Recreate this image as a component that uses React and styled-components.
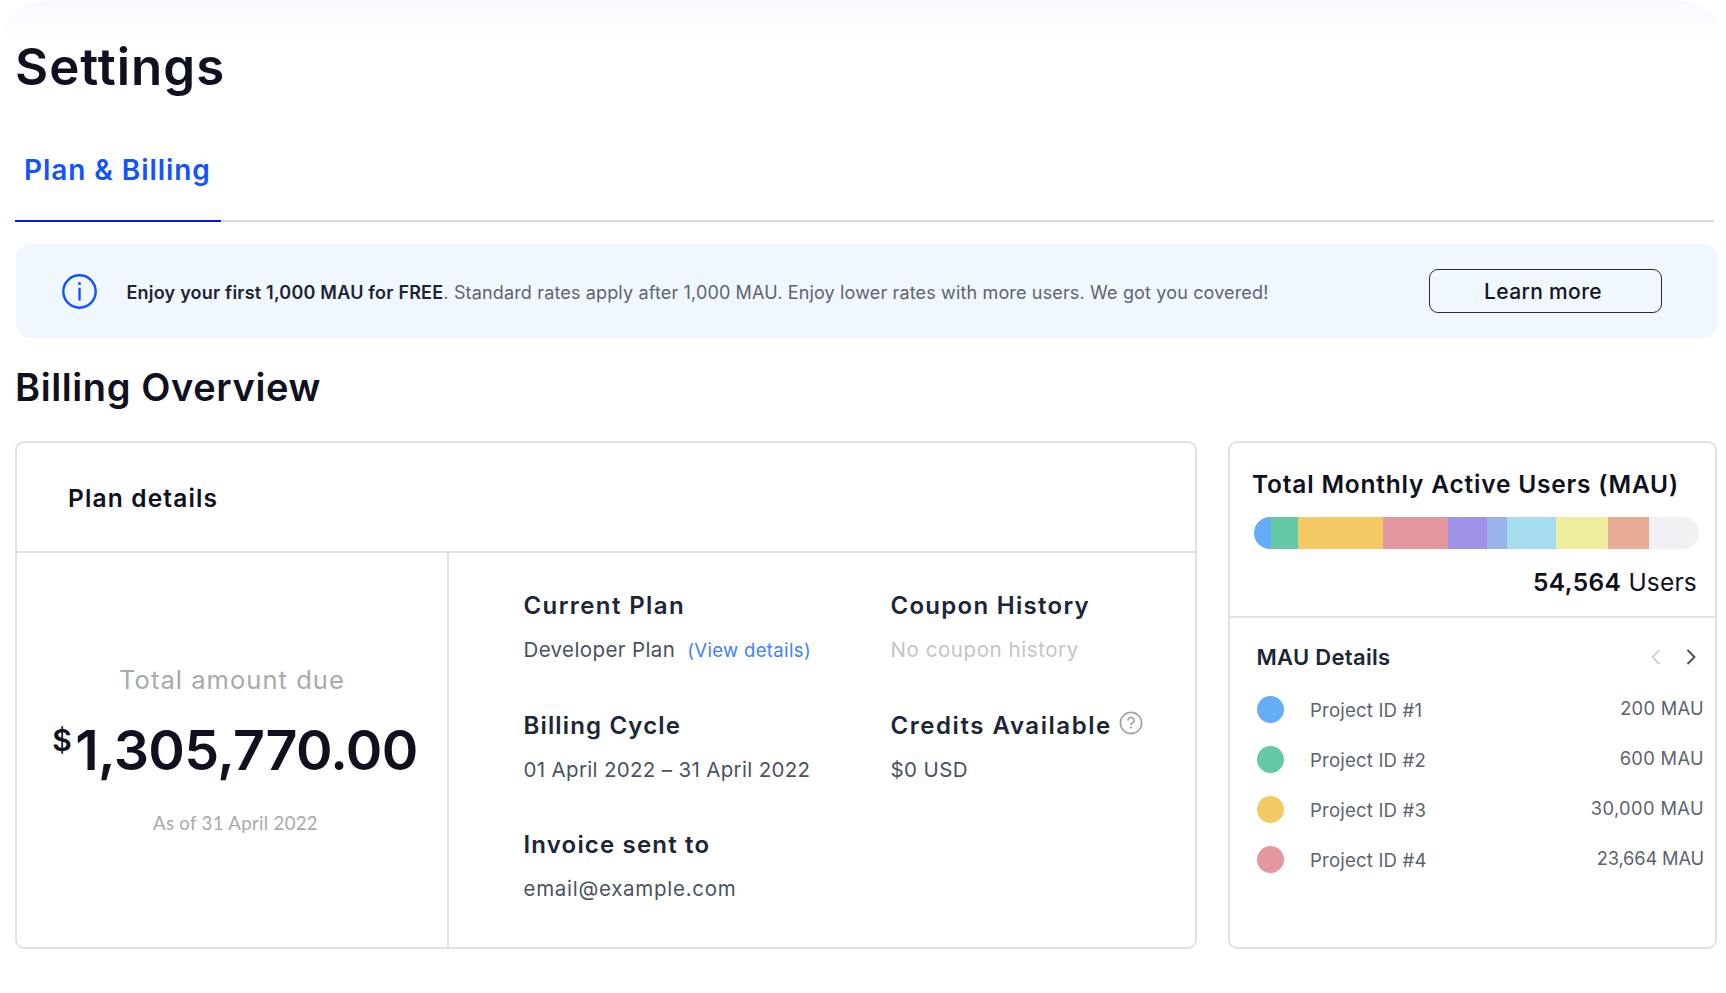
import React from "react";
import styled, { createGlobalStyle } from "styled-components";

const GlobalStyle = createGlobalStyle`
  * { box-sizing: border-box; }
  body { margin: 0; background: #fff; font-family: "Inter", "Open Sans", sans-serif; color: #0f1020; }
  h1, h2, h3, p { margin: 0; }
`;

const line = "#e1e1e1";

const Page = styled.main`
  width: 1720px;
  height: 993px;
  margin: 0 3px;
  padding: 37px 0 0 12px;
  border-radius: 48px 48px 0 0 / 40px 40px 0 0;
  background: linear-gradient(#f7f9ff 0, #fbfcff 20px, #fff 40px);
  overflow: hidden;
`;

const PageTitle = styled.h1`
  font-size: 51px;
  line-height: 60px;
  font-weight: 600;
  letter-spacing: 1px;
`;

const Tabs = styled.nav`
  display: flex;
  width: 1699px;
  height: 125px;
  border-bottom: 2px solid #dadada;
`;

const Tab = styled.div`
  width: 206px;
  height: 125px;
  padding: 53px 0 0 9px;
  border-bottom: 2px solid #0a14ff;
  color: #1352ff;
  font-size: 28px;
  line-height: 40px;
  font-weight: 600;
  letter-spacing: 0.93px;
  white-space: nowrap;
`;

const Banner = styled.section`
  display: flex;
  align-items: center;
  width: 1702px;
  height: 94px;
  margin: 22px 0 0 1px;
  padding: 0 56px 0 46px;
  border-radius: 15px;
  background: #f0f7ff;
`;

const BannerText = styled.p`
  flex: 1;
  margin: 4px 0 0 29.5px;
  color: #5d6470;
  font-size: 18px;
  line-height: 24px;
  letter-spacing: 0.15px;
  white-space: nowrap;

  strong {
    color: #1c2433;
    font-weight: 600;
    letter-spacing: 0.21px;
  }
`;

const OutlineButton = styled.button`
  width: 233px;
  height: 44px;
  padding: 2px 5px 0 0;
  border: 1.5px solid #2a2d38;
  border-radius: 9px;
  background: transparent;
  color: #12141f;
  font: 500 21px/30px "Inter", sans-serif;
  letter-spacing: 0.35px;
`;

const SectionTitle = styled.h2`
  margin-top: 24px;
  font-size: 38px;
  line-height: 50px;
  font-weight: 600;
  letter-spacing: 0.6px;
`;

const Cards = styled.div`
  display: flex;
  gap: 31px;
  margin-top: 29px;
`;

const Card = styled.section`
  width: ${(p) => p.$width}px;
  height: 508px;
  border: 2px solid ${line};
  border-radius: 9px;
  display: flex;
  flex-direction: column;
`;

const CardHeader = styled.h3`
  flex: none;
  height: 110px;
  padding: 40px 0 0 51px;
  border-bottom: 2px solid ${line};
  font-size: 24.5px;
  line-height: 30px;
  font-weight: 600;
  letter-spacing: 1.15px;
`;

const PlanBody = styled.div`
  flex: 1;
  min-height: 0;
  display: flex;
`;

const AmountPane = styled.div`
  width: 432px;
  padding-top: 112px;
  border-right: 2px solid ${line};
  display: flex;
  flex-direction: column;
  align-items: center;
  color: #a9a9a9;
`;

const AmountLabel = styled.p`
  font-size: 25.5px;
  line-height: 30px;
  font-weight: 400;
  letter-spacing: 1.05px;
`;

const Amount = styled.div`
  display: flex;
  margin: 25px 0 31px 6px;
  color: #10101f;
  font-size: 55.5px;
  line-height: 60px;
  font-weight: 600;
  letter-spacing: -0.65px;
`;

const Currency = styled.span`
  margin: 5px 4px 0 0;
  font-size: 30px;
  line-height: 30px;
`;

const AmountDate = styled.p`
  margin-left: 7px;
  font-family: "Lato", sans-serif;
  font-size: 18.6px;
  line-height: 24px;
  letter-spacing: 0.32px;
`;

const InfoGrid = styled.div`
  display: grid;
  grid-template-columns: 367px 1fr;
  grid-auto-rows: 119.5px;
  padding: 38px 0 0 74.5px;
`;

const InfoTitle = styled.h3`
  display: flex;
  align-items: center;
  color: #1c2637;
  font-size: 24px;
  line-height: 30px;
  font-weight: 600;
  letter-spacing: ${(p) => p.$spacing}px;
  white-space: nowrap;

  svg { margin: -5px 0 0 7px; }
`;

const InfoValue = styled.p`
  margin-top: 15px;
  color: ${(p) => (p.$muted ? "#c4c4c6" : "#4a5260")};
  font-size: 20.5px;
  line-height: 28px;
  font-weight: 400;
  letter-spacing: ${(p) => p.$spacing}px;
  white-space: nowrap;
`;

const DetailsLink = styled.a`
  margin-left: 12px;
  color: #4080ff;
  font-size: 18.5px;
  font-weight: 400;
  letter-spacing: 0.35px;
`;

const UsageSummary = styled.div`
  height: 175px;
  padding: 26px 17px 0 22px;
  border-bottom: 2px solid ${line};
`;

const UsageTitle = styled.h3`
  font-size: 24.5px;
  line-height: 30px;
  font-weight: 600;
  letter-spacing: 0.8px;
  white-space: nowrap;
`;

const UsageBar = styled.div`
  display: flex;
  width: 445px;
  height: 32px;
  margin: 18px 0 18px 1.5px;
  border-radius: 16px;
  background: #f1f1f3;
  overflow: hidden;
`;

const Segment = styled.span`
  width: ${(p) => p.$width}px;
  background: ${(p) => p.$color};
`;

const UserCount = styled.p`
  padding-right: 1px;
  text-align: right;
  font-size: 24.5px;
  line-height: 30px;
  letter-spacing: 0.2px;

  strong { font-weight: 600; letter-spacing: 0.4px; }
`;

const UsageDetails = styled.div`
  padding: 25px 11px 0 26.5px;
`;

const DetailsHeader = styled.div`
  display: flex;
  align-items: center;
  height: 28px;
  margin-bottom: 13px;
  padding-right: 7px;

  h3 {
    flex: 1;
    color: #1c2637;
    font-size: 22px;
    line-height: 28px;
    font-weight: 600;
    letter-spacing: 0.3px;
  }
`;

const ProjectRow = styled.div`
  display: flex;
  align-items: center;
  height: 50px;
  color: #5c636f;
  font-weight: 400;
  line-height: 24px;
`;

const Dot = styled.span`
  width: 27px;
  height: 27px;
  border-radius: 50%;
  background: ${(p) => p.$color};
`;

const ProjectName = styled.span`
  flex: 1;
  margin: 2px 0 0 26.5px;
  font-size: 18.6px;
  letter-spacing: 0.18px;
`;

const ProjectUsage = styled.span`
  margin-top: -2px;
  font-size: 18.3px;
  letter-spacing: ${(p) => p.$spacing}px;
`;

const InfoIcon = () => (
  <svg width="35" height="35" viewBox="0 0 35 35" fill="none" stroke="#1352ff">
    <circle cx="17.5" cy="17.5" r="16.2" strokeWidth="2.4" />
    <path d="M17.5 13.8v12.7" strokeWidth="2.4" />
    <circle cx="17.5" cy="9.4" r="1.5" fill="#1352ff" stroke="none" />
  </svg>
);

const HelpIcon = () => (
  <svg width="24" height="24" viewBox="0 0 24 24" fill="none" stroke="#a3a3a3" strokeWidth="1.7">
    <circle cx="12" cy="12" r="10.6" />
    <path d="M9 9.4a3 3 0 1 1 4.6 2.5c-1.1.7-1.6 1.1-1.6 2.2" />
    <circle cx="12" cy="16.6" r="1.1" fill="#a3a3a3" stroke="none" />
  </svg>
);

const Chevrons = () => (
  <svg width="48" height="18" viewBox="0 0 48 18" fill="none">
    <path d="M10.5 2L3.5 9l7 7" stroke="#c4c4c4" strokeWidth="1.4" />
    <path d="M38.5 2l7 7-7 7" stroke="#4a4a4a" strokeWidth="1.8" />
  </svg>
);

const segments = [
  ["#65adf7", 17.8],
  ["#66c9a6", 26.5],
  ["#f3ca63", 85.2],
  ["#e4979f", 64.7],
  ["#a192e9", 39.2],
  ["#9ab4ea", 20.2],
  ["#a5ddee", 48.7],
  ["#eeee9e", 52.3],
  ["#e7ab96", 41.3],
];

const projects = [
  ["Project ID #1", "200 MAU", "#65adf7", 0.3],
  ["Project ID #2", "600 MAU", "#66c9a6", 0.35],
  ["Project ID #3", "30,000 MAU", "#f3ca63", 0.4],
  ["Project ID #4", "23,664 MAU", "#e4979f", -0.15],
];

export default function App() {
  return (
    <>
      <GlobalStyle />
      <Page>
        <PageTitle>Settings</PageTitle>
        <Tabs>
          <Tab>Plan &amp; Billing</Tab>
        </Tabs>
        <Banner>
          <InfoIcon />
          <BannerText>
            <strong>Enjoy your first 1,000 MAU for FREE</strong>. Standard rates apply after 1,000 MAU. Enjoy lower
            rates with more users. We got you covered!
          </BannerText>
          <OutlineButton>Learn more</OutlineButton>
        </Banner>
        <SectionTitle>Billing Overview</SectionTitle>
        <Cards>
          <Card $width={1182}>
            <CardHeader>Plan details</CardHeader>
            <PlanBody>
              <AmountPane>
                <AmountLabel>Total amount due</AmountLabel>
                <Amount>
                  <Currency>$</Currency>
                  1,305,770.00
                </Amount>
                <AmountDate>As of 31 April 2022</AmountDate>
              </AmountPane>
              <InfoGrid>
                <div>
                  <InfoTitle $spacing={1.4}>Current Plan</InfoTitle>
                  <InfoValue $spacing={0.38}>
                    Developer Plan<DetailsLink>(View details)</DetailsLink>
                  </InfoValue>
                </div>
                <div>
                  <InfoTitle $spacing={1.28}>Coupon History</InfoTitle>
                  <InfoValue $muted $spacing={0.57}>No coupon history</InfoValue>
                </div>
                <div>
                  <InfoTitle $spacing={1.15}>Billing Cycle</InfoTitle>
                  <InfoValue $spacing={0.33}>01 April 2022 – 31 April 2022</InfoValue>
                </div>
                <div>
                  <InfoTitle $spacing={1.55}>
                    Credits Available
                    <HelpIcon />
                  </InfoTitle>
                  <InfoValue $spacing={0.4}>$0 USD</InfoValue>
                </div>
                <div>
                  <InfoTitle $spacing={1.18}>Invoice sent to</InfoTitle>
                  <InfoValue $spacing={0.72}>email@example.com</InfoValue>
                </div>
              </InfoGrid>
            </PlanBody>
          </Card>
          <Card $width={489}>
            <UsageSummary>
              <UsageTitle>Total Monthly Active Users (MAU)</UsageTitle>
              <UsageBar>
                {segments.map(([color, width]) => (
                  <Segment key={color} $color={color} $width={width} />
                ))}
              </UsageBar>
              <UserCount>
                <strong>54,564</strong> <span>Users</span>
              </UserCount>
            </UsageSummary>
            <UsageDetails>
              <DetailsHeader>
                <h3>MAU Details</h3>
                <Chevrons />
              </DetailsHeader>
              {projects.map(([name, usage, color, spacing]) => (
                <ProjectRow key={name}>
                  <Dot $color={color} />
                  <ProjectName>{name}</ProjectName>
                  <ProjectUsage $spacing={spacing}>{usage}</ProjectUsage>
                </ProjectRow>
              ))}
            </UsageDetails>
          </Card>
        </Cards>
      </Page>
    </>
  );
}
